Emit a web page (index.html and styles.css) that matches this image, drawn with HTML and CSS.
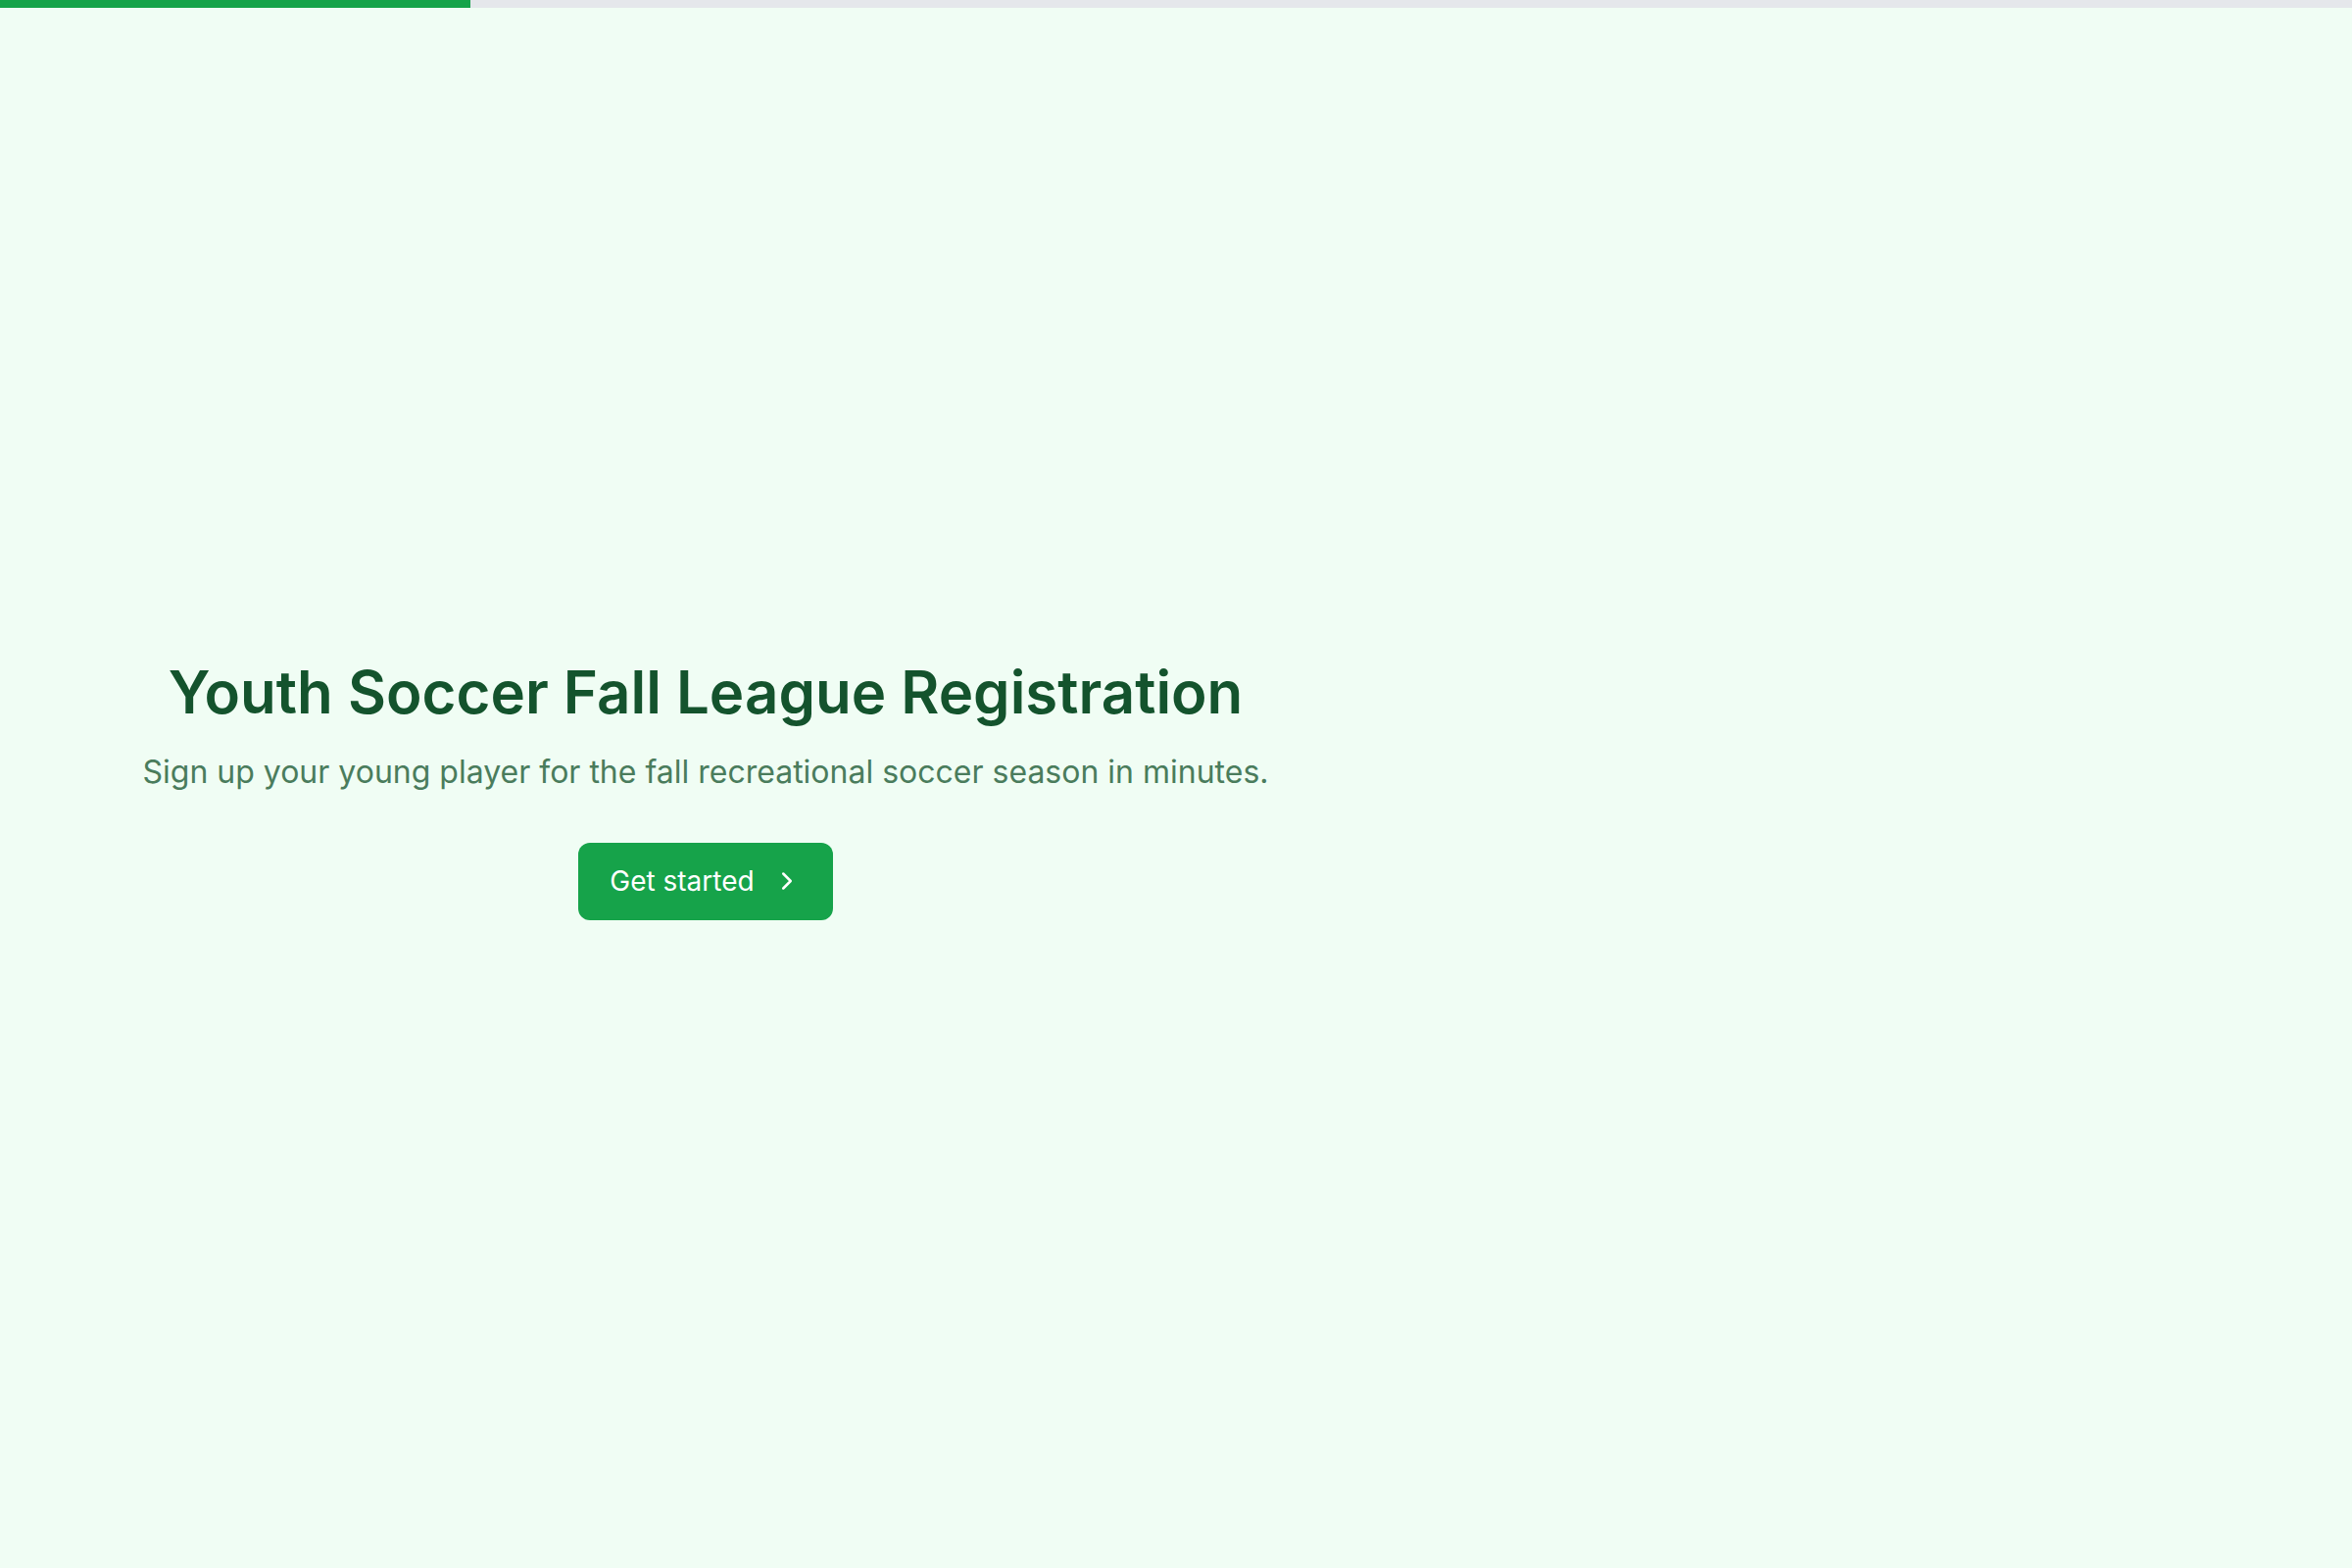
FILE: index.html
```html
<!DOCTYPE html>
<html lang="en">
<head>
    <meta charset="UTF-8">
    <meta name="viewport" content="width=device-width, initial-scale=1.0">
    <title>Youth Soccer Fall League Registration</title>
    <link rel="stylesheet" href="styles.css">
</head>
<body>
    <div class="progress">
        <div class="progress-fill" style="width: 20%"></div>
    </div>
    <div class="page">
        <div class="intro">
            <h1>Youth Soccer Fall League Registration</h1>
            <p class="subtitle">Sign up your young player for the fall recreational soccer season in minutes.</p>
            <button class="start-button">
                Get started
                <svg class="chevron" viewBox="0 0 24 24" fill="none" stroke="currentColor" stroke-width="2" stroke-linecap="round" stroke-linejoin="round"><path d="m9 18 6-6-6-6"/></svg>
            </button>
        </div>
        <div class="side"></div>
    </div>
</body>
</html>
```

FILE: styles.css
```css
body {
    font-family: Inter, "Noto Sans", sans-serif;
    background-color: #f0fdf4;
    margin: 0;
    min-height: 100vh;
    display: flex;
    flex-direction: column;
}

.progress {
    height: 8px;
    background-color: #e5e7eb;
}

.progress-fill {
    height: 100%;
    background-color: #16a34a;
}

.page {
    flex: 1;
    display: flex;
}

.intro {
    width: 60%;
    display: flex;
    flex-direction: column;
    align-items: center;
    justify-content: center;
    text-align: center;
}

.side {
    flex: 1;
}

h1 {
    margin: 0;
    font-size: 60px;
    line-height: 72px;
    font-weight: 600;
    color: #14532d;
}

.subtitle {
    margin: 22px 0 0;
    font-size: 32px;
    line-height: 48px;
    color: #4a7c5c;
}

.start-button {
    margin-top: 48px;
    height: 79px;
    padding: 0 32px;
    display: flex;
    align-items: center;
    gap: 18px;
    background-color: #16a34a;
    color: #ffffff;
    border: none;
    border-radius: 12px;
    font-family: inherit;
    font-size: 28px;
    cursor: pointer;
}

.chevron {
    width: 30px;
    height: 30px;
}
```
